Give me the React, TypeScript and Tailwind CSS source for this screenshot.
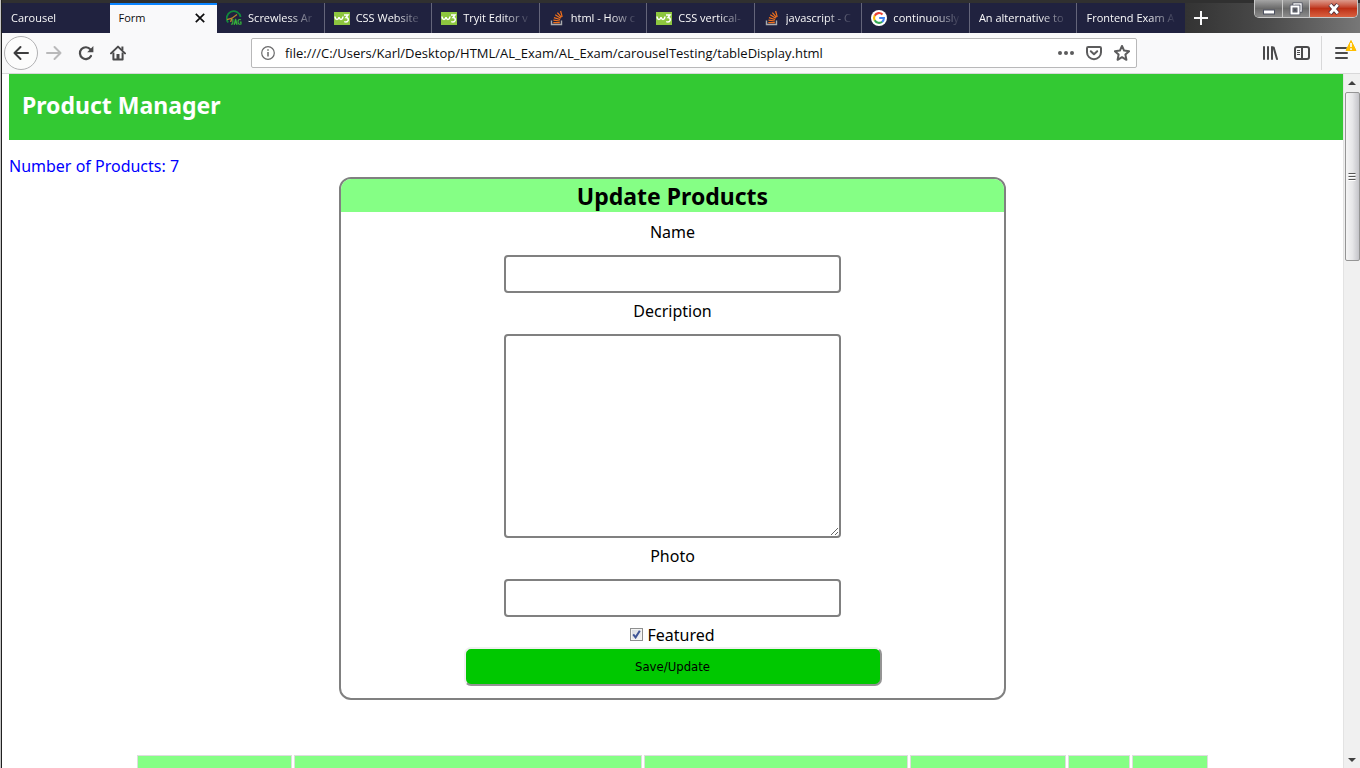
import React from "react";

function W3Icon() {
  return (
    <svg width="16" height="13" viewBox="0 0 16 13" className="shrink-0" aria-hidden="true">
      <rect width="16" height="13" fill="#8dc63f" />
      <path d="M1 4.5 Q1.2 7.4 3 7.4 Q4.6 7.4 5 5 Q5.4 7.4 7 7.4 Q8.6 7.4 9 4.5" fill="none" stroke="#fff" strokeWidth="1.5" />
      <path d="M10 3 H14 L12 5.6 Q14.6 5.8 14.2 8.2 Q13.4 10.6 10.2 9.6" fill="none" stroke="#fff" strokeWidth="1.5" />
    </svg>
  );
}

function StackIcon() {
  return (
    <svg width="16" height="16" viewBox="0 0 16 16" className="shrink-0" aria-hidden="true">
      <path d="M2.5 10.5 V14.5 H12.5 V10.5" fill="none" stroke="#a9abae" strokeWidth="1.4" />
      <path d="M4.3 12.6 H10.8 M4.4 10.2 L10.8 11 M4.9 7.6 L11.1 9.5 M6.2 4.8 L11.7 8.3 M8.4 2.6 L12.4 7.4 M11.6 1 L13.2 6.8" fill="none" stroke="#f2711c" strokeWidth="1.2" />
    </svg>
  );
}

function JagIcon() {
  return (
    <svg width="16" height="16" viewBox="0 0 16 16" className="shrink-0" aria-hidden="true">
      <path d="M2.2 12.5 A7 7 0 1 1 14.6 7" fill="none" stroke="#118a3c" strokeWidth="1.8" />
      <path d="M1 9.6 L6 8.2 L11 4.4 M6 8.2 L4.6 12" fill="none" stroke="#b8862c" strokeWidth="1.3" />
      <path d="M6.8 9 V13 Q6.6 14.6 5 14 M8.2 14.8 L9.6 9 L11 14.8 M8.6 12.8 H10.6 M15 9.8 Q12 8.6 12 12 Q12.2 15 15 14 V12.2 H13.8" fill="none" stroke="#35b23a" strokeWidth="1.2" />
    </svg>
  );
}

function GoogleIcon() {
  return (
    <svg width="16" height="16" viewBox="0 0 16 16" className="shrink-0" aria-hidden="true">
      <circle cx="8" cy="8" r="8" fill="#fff" />
      <g fill="none" strokeWidth="2.1">
        <path d="M11.5 4.5 A4.9 4.9 0 0 0 3.7 5.7" stroke="#ea4335" />
        <path d="M3.7 5.6 A4.9 4.9 0 0 0 3.7 10.4" stroke="#fbbc05" />
        <path d="M3.7 10.3 A4.9 4.9 0 0 0 11.2 11.7" stroke="#34a853" />
        <path d="M8.2 8 H12.9 Q12.9 10.4 11.1 11.8" stroke="#4285f4" />
      </g>
    </svg>
  );
}

type Tab = { title: string; icon?: React.ReactNode; active?: boolean };

const tabs: Tab[] = [
  { title: "Carousel" },
  { title: "Form", active: true },
  { title: "Screwless Ar", icon: <JagIcon /> },
  { title: "CSS Website", icon: <W3Icon /> },
  { title: "Tryit Editor v", icon: <W3Icon /> },
  { title: "html - How c", icon: <StackIcon /> },
  { title: "CSS vertical-", icon: <W3Icon /> },
  { title: "javascript - C", icon: <StackIcon /> },
  { title: "continuously", icon: <GoogleIcon /> },
  { title: "An alternative to" },
  { title: "Frontend Exam A" },
];

function TabItem({ tab, divided }: { tab: Tab; divided: boolean }) {
  if (tab.active) {
    return (
      <div className="flex min-w-0 items-center border-t-2 border-[#0a84ff] bg-[#f9f9fa] pr-3 pb-[2px] pl-[9px] text-[#0c0c0d]">
        <button role="tab" aria-selected="true" className="flex-1 text-left">
          {tab.title}
        </button>
        <button aria-label="Close tab">
          <svg width="10" height="10" viewBox="0 0 10 10">
            <path d="M0.8 0.8 L9.2 9.2 M9.2 0.8 L0.8 9.2" stroke="#0c0c0d" strokeWidth="1.7" />
          </svg>
        </button>
      </div>
    );
  }
  return (
    <button
      role="tab"
      aria-selected="false"
      className={
        "flex min-w-0 items-center gap-[6px] bg-[#20223f] pr-2 pl-[9px] text-left text-[#f9f9fa] " +
        (divided ? "border-r border-[#64657a]" : "border-r border-[#20223f]")
      }
    >
      {tab.icon}
      <span className="min-w-0 flex-1 overflow-hidden whitespace-nowrap [mask-image:linear-gradient(to_left,transparent,black_28px)]">
        {tab.title}
      </span>
    </button>
  );
}

function WindowControls() {
  return (
    <div className="mr-[2px] flex h-[18px] self-start overflow-hidden rounded-b-[5px] border border-t-0 border-[#c9c9c9]">
      <button aria-label="Minimize" className="flex w-[28px] items-center justify-center border-r border-[#c9c9c9] bg-linear-to-b from-[#a5a5a5] via-[#6a6a6a] to-[#8c8c8c]">
        <svg width="12" height="14" viewBox="0 0 12 14">
          <rect x="0.5" y="8" width="11" height="4" fill="#fff" stroke="#4c5060" />
        </svg>
      </button>
      <button aria-label="Restore" className="flex w-[27px] items-center justify-center border-r border-[#c9c9c9] bg-linear-to-b from-[#a5a5a5] via-[#6a6a6a] to-[#8c8c8c]">
        <svg width="14" height="14" viewBox="0 0 14 14">
          <path d="M5 2 H12 V9 H5 Z" fill="none" stroke="#4c5060" strokeWidth="3" />
          <path d="M5 2 H12 V9 H5 Z" fill="none" stroke="#fff" strokeWidth="1.4" />
          <rect x="2.5" y="4.5" width="7" height="7" fill="#6a6a6a" stroke="#4c5060" strokeWidth="3.4" />
          <rect x="2.5" y="4.5" width="7" height="7" fill="none" stroke="#fff" strokeWidth="2" />
          <rect x="5" y="7" width="2" height="2" fill="#4c5060" />
        </svg>
      </button>
      <button aria-label="Close" className="flex w-[47px] items-center justify-center bg-linear-to-b from-[#dc9a8c] via-[#bd2f15] to-[#d9603f]">
        <svg width="14" height="12" viewBox="0 0 14 12">
          <path d="M3 1.5 L11 10.5 M11 1.5 L3 10.5" stroke="#50303a" strokeWidth="4.6" />
          <path d="M3.2 1.8 L10.8 10.2 M10.8 1.8 L3.2 10.2" stroke="#fff" strokeWidth="2.8" />
        </svg>
      </button>
    </div>
  );
}

function TabStrip() {
  return (
    <div className="flex h-[33px] items-stretch border-t-3 border-[#303030] bg-linear-to-r from-[#2b2b2b] from-85% via-[#4a4a4a] via-93% to-[#777777]">
      <div role="tablist" className="grid w-[1183px] min-w-0 grid-cols-11 text-[11px]">
        {tabs.map((tab, i) => (
          <TabItem key={tab.title} tab={tab} divided={i > 1 && i < tabs.length - 1} />
        ))}
      </div>
      <button aria-label="New tab" className="flex w-8 shrink-0 items-center justify-center">
        <svg width="14" height="14" viewBox="0 0 14 14">
          <path d="M7 0 V14 M0 7 H14" stroke="#f9f9fa" strokeWidth="2" />
        </svg>
      </button>
      <div className="-mt-[3px] ml-auto flex">
        <WindowControls />
      </div>
    </div>
  );
}

function Toolbar() {
  return (
    <div className="flex h-[41px] items-center border-b border-[#d8d8d9] bg-[#f9f9fa] text-[#4a4a4b]">
      <div className="flex w-[249px] shrink-0 items-center gap-4 pl-[2px]">
        <button aria-label="Back" className="flex size-[34px] items-center justify-center rounded-full border border-[#b1b1b3] bg-[#fcfcfc]">
          <svg width="16" height="16" viewBox="0 0 16 16" fill="none" stroke="#3d3d3e" strokeWidth="2" strokeLinecap="round" strokeLinejoin="round">
            <path d="M15 8 H1.5 M7.5 2 L1.5 8 L7.5 14" />
          </svg>
        </button>
        <button aria-label="Forward" className="-ml-2">
          <svg width="16" height="16" viewBox="0 0 16 16" fill="none" stroke="#b9b9ba" strokeWidth="2" strokeLinecap="round" strokeLinejoin="round">
            <path d="M1 8 H14.5 M8.5 2 L14.5 8 L8.5 14" />
          </svg>
        </button>
        <button aria-label="Reload">
          <svg width="16" height="16" viewBox="0 0 16 16" fill="none" stroke="#4a4a4b" strokeWidth="2.2">
            <path d="M13 11 A5.9 5.9 0 1 1 12.4 4.4" strokeLinecap="round" />
            <path d="M15.4 1 V7.2 H9.2 Z" fill="#4a4a4b" stroke="none" />
          </svg>
        </button>
        <button aria-label="Home">
          <svg width="16" height="16" viewBox="0 0 16 16" fill="none" stroke="#4a4a4b" strokeWidth="2">
            <path d="M1 8.4 L8 1.6 L15 8.4" strokeLinecap="round" strokeLinejoin="round" />
            <path d="M3.4 7.5 V14.6 H12.6 V7.5" strokeLinejoin="round" />
            <path d="M8 15 V9" strokeWidth="3" />
            <path d="M12.4 1.5 V5" />
          </svg>
        </button>
      </div>
      <div className="flex h-[30px] w-[886px] min-w-0 items-center rounded-[2px] border border-[#b8b8b9] bg-white pr-[6px] pl-[9px]">
        <svg width="14" height="14" viewBox="0 0 14 14" className="shrink-0" fill="none" stroke="#6a6a6b" aria-hidden="true">
          <circle cx="7" cy="7" r="6.3" strokeWidth="1.2" />
          <path d="M7 6 V10.5 M7 3.2 V4.8" strokeWidth="1.5" />
        </svg>
        <input
          aria-label="Address"
          className="ml-[10px] min-w-0 flex-1 bg-transparent pt-[2px] text-[13px] text-[#0c0c0d] outline-none"
          defaultValue="file:///C:/Users/Karl/Desktop/HTML/AL_Exam/AL_Exam/carouselTesting/tableDisplay.html"
        />
        <div className="flex shrink-0 items-center gap-3">
          <button aria-label="Page actions">
            <svg width="16" height="16" viewBox="0 0 16 16" fill="#5c5c5d">
              <circle cx="2" cy="8" r="2" />
              <circle cx="8" cy="8" r="2" />
              <circle cx="14" cy="8" r="2" />
            </svg>
          </button>
          <button aria-label="Save to Pocket">
            <svg width="16" height="16" viewBox="0 0 16 16" fill="none" stroke="#5c5c5d" strokeWidth="2" strokeLinecap="round" strokeLinejoin="round">
              <path d="M2.2 2 H13.8 Q15 2 15 3.2 V7.2 A7 7 0 0 1 1 7.2 V3.2 Q1 2 2.2 2 Z" />
              <path d="M4.8 6.2 L8 9.2 L11.2 6.2" />
            </svg>
          </button>
          <button aria-label="Bookmark this page">
            <svg width="16" height="16" viewBox="0 0 16 16" fill="none" stroke="#5c5c5d" strokeWidth="2" strokeLinejoin="round">
              <path d="M8 1 L10.1 5.6 L15.1 6.2 L11.4 9.6 L12.4 14.8 L8 12.2 L3.6 14.8 L4.6 9.6 L0.9 6.2 L5.9 5.6 Z" />
            </svg>
          </button>
        </div>
      </div>
      <div className="ml-auto flex h-full shrink-0 items-center">
        <button aria-label="Library" className="mr-4">
          <svg width="16" height="16" viewBox="0 0 16 16" fill="none" stroke="#4a4a4b" strokeWidth="2" strokeLinecap="round">
            <path d="M2 2 V14 M6 2 V14 M10 2 V14 M11.6 2.4 L15 14" />
          </svg>
        </button>
        <button aria-label="Sidebars" className="mr-[11px]">
          <svg width="16" height="16" viewBox="0 0 16 16" fill="none" stroke="#4a4a4b" strokeWidth="2">
            <rect x="1" y="2" width="14" height="12" rx="2" />
            <path d="M8 2 V14" />
            <path d="M3 5.5 H6 M3 7.5 H6 M3 9.5 H6" strokeWidth="1" />
          </svg>
        </button>
        <div className="flex h-[34px] items-center border-l border-[#d8d8d9] pl-3">
          <button aria-label="Open menu">
            <svg width="26" height="28" viewBox="0 0 26 28">
              <path d="M2 9 H12 M2 14 H13 M2 19 H13" stroke="#4a4a4b" strokeWidth="2" strokeLinecap="round" />
              <path d="M17 1.5 L22 11.5 H12 Z" fill="#ffbf00" stroke="#ffbf00" strokeLinejoin="round" />
              <path d="M17 4 V8 M17 9.2 V11" stroke="#fff" strokeWidth="1.6" />
            </svg>
          </button>
        </div>
      </div>
    </div>
  );
}

function Scrollbar() {
  return (
    <div className="flex w-[17px] shrink-0 flex-col items-center border-l border-[#e3e3e3] bg-[#f0f0f0]" aria-hidden="true">
      <div className="flex h-[18px] items-center justify-center">
        <svg width="8" height="4" viewBox="0 0 8 4">
          <path d="M4 0 L8 4 H0 Z" fill="#404040" />
        </svg>
      </div>
      <div className="flex h-[169px] w-[15px] items-center justify-center rounded-[2px] border border-[#959595] bg-linear-to-r from-[#f5f5f5] via-[#e6e6e8] to-[#c4c4c9]">
        <svg width="8" height="8" viewBox="0 0 8 8">
          <path d="M0.5 0.5 H7.5 M0.5 3.5 H7.5 M0.5 6.5 H7.5" stroke="#555" />
          <path d="M0.5 1.5 H7.5 M0.5 4.5 H7.5 M0.5 7.5 H7.5" stroke="#fff" />
        </svg>
      </div>
      <div className="mt-auto flex h-[16px] items-center justify-center">
        <svg width="8" height="4" viewBox="0 0 8 4">
          <path d="M0 0 H8 L4 4 Z" fill="#404040" />
        </svg>
      </div>
    </div>
  );
}

function ProductForm() {
  return (
    <form
      className="mx-auto box-content flex w-1/2 flex-col items-center rounded-[12px] border-2 border-[#808080] pb-3"
      onSubmit={(e) => e.preventDefault()}
    >
      <h2 className="h-[33px] w-full rounded-t-[10px] bg-[#85ff85] text-center text-[23px] leading-[35px] font-bold">
        Update Products
      </h2>
      <label htmlFor="name" className="pt-[2px] pb-1 leading-[37px]">Name</label>
      <input id="name" type="text" className="box-content h-[34px] w-1/2 rounded-[4px] border-2 border-[#808080] px-px" />
      <label htmlFor="description" className="pb-1 leading-[37px]">Decription</label>
      <textarea id="description" className="box-content h-[200px] w-1/2 rounded-[4px] border-2 border-[#808080] px-px" />
      <label htmlFor="photo" className="pb-1 leading-[37px]">Photo</label>
      <input id="photo" type="text" className="box-content h-[34px] w-1/2 rounded-[4px] border-2 border-[#808080] px-px" />
      <div className="flex h-[30px] items-center gap-1 pt-[5px]">
        <span className="grid size-[13px] place-items-center">
          <input
            id="featured"
            type="checkbox"
            defaultChecked
            className="peer col-start-1 row-start-1 size-[13px] appearance-none border border-[#8e8f8f] bg-linear-to-br from-[#d5d9de] to-[#f6f6f6] shadow-[inset_0_0_0_1px_#f4f4f4]"
          />
          <svg width="9" height="9" viewBox="0 0 9 9" className="pointer-events-none col-start-1 row-start-1 hidden peer-checked:block">
            <path d="M1.2 4.4 L3.6 7.4 L7.8 0.8" fill="none" stroke="#3e5496" strokeWidth="2" />
          </svg>
        </span>
        <label htmlFor="featured" className="leading-6">Featured</label>
      </div>
      <button
        type="submit"
        className="h-[39px] w-[63%] rounded-[7px] border-2 border-t-[#f0f0f0] border-r-[#949494] border-b-[#949494] border-l-[#f0f0f0] bg-[#00c800] font-['DejaVu_Sans_Condensed','DejaVu_Sans',sans-serif] text-[13px]"
      >
        Save/Update
      </button>
    </form>
  );
}

function ProductTable() {
  return (
    <table className="mx-auto mt-[53px] w-[81%] table-fixed border-separate border-spacing-[2px]">
      <colgroup>
        <col className="w-[14.6%]" />
        <col className="w-[32.8%]" />
        <col className="w-[24.9%]" />
        <col className="w-[14.7%]" />
        <col className="w-[5.8%]" />
        <col className="w-[7.2%]" />
      </colgroup>
      <thead>
        <tr>
          {[0, 1, 2, 3, 4, 5].map((c) => (
            <th key={c} scope="col" className="h-9 border border-[#dddddd] bg-[#85ff85]" />
          ))}
        </tr>
      </thead>
    </table>
  );
}

export default function App() {
  return (
    <div className="border-l border-[#c4c4c4]">
      <div className="flex h-screen flex-col overflow-hidden border-l border-[#202020] bg-white font-['Segoe_UI','Open_Sans','Noto_Sans',sans-serif]">
        <TabStrip />
        <Toolbar />
        <div className="flex min-h-0 flex-1">
          <main className="min-w-0 flex-1 overflow-hidden px-[7px] font-['Comic_Sans_MS','Noto_Sans',sans-serif] text-base text-black">
            <header className="-mr-[7px] h-[66px] bg-[#33c933] px-[13px] pt-[14px]">
              <h1 className="text-[23px] leading-[34px] font-bold text-white">Product Manager</h1>
            </header>
            <p className="mt-[15px] leading-[22px] text-[#0000ff]">Number of Products: 7</p>
            <ProductForm />
            <ProductTable />
          </main>
          <Scrollbar />
        </div>
      </div>
    </div>
  );
}
